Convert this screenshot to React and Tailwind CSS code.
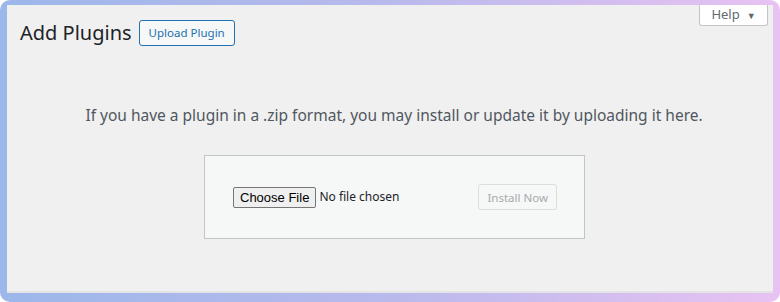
export default function App() {
  return (
    <div className="w-[780px] h-[302px] rounded-[10px] bg-gradient-to-r from-[#9cb7ea] via-[#b9b9ec] to-[#e8c2f2] pt-[5px] pl-[7px] pr-[7px] pb-[9px]">
      <div className="relative h-full bg-[#f0f0f1] border-b-2 border-[#e4e4e6] font-['Noto_Sans',sans-serif] text-[#3c434a]">
        {/* Help tab */}
        <div className="absolute top-0 right-[5px] w-[69px] h-[21px] bg-white border border-t-0 border-[#c3c4c7] rounded-b-[3px] flex items-center justify-center gap-[7px] text-[13px] text-[#646970]">
          <span>Help</span>
          <span className="text-[9px] leading-none">▼</span>
        </div>

        {/* Header */}
        <div className="flex items-center gap-[7px] pl-[13px] pt-[13px]">
          <h1 className="text-[20px] leading-[29px] text-[#1d2327] font-normal">Add Plugins</h1>
          <button className="h-[26px] px-[9px] border border-[#2271b1] rounded-[3px] bg-[#f6f7f7] text-[#2271b1] text-[11.5px] leading-none">
            Upload Plugin
          </button>
        </div>

        {/* Description */}
        <p className="mt-[57px] text-center text-[15.5px] text-[#50575e] pl-[8px]">
          If you have a plugin in a .zip format, you may install or update it by uploading it here.
        </p>

        {/* Upload box */}
        <div className="ml-[197px] mt-[28px] w-[381px] h-[84px] bg-[#f6f7f7] border border-[#c3c4c7] flex items-center pl-[28px] pr-[27px]">
          <div className="flex items-center gap-[3px] font-['Liberation_Sans',sans-serif] text-[13px] text-black">
            <span className="h-[21px] px-[6px] flex items-center border border-[#767676] rounded-[2px] bg-[#efefef]">
              Choose File
            </span>
            <span className="font-['Noto_Sans',sans-serif] text-[12px] text-[#1d2327]">No file chosen</span>
          </div>
          <button className="ml-auto h-[26px] px-[8px] border border-[#dcdcde] rounded-[3px] bg-[#f6f7f7] text-[#a7aaad] text-[11.5px] leading-none">
            Install Now
          </button>
        </div>
      </div>
    </div>
  );
}
